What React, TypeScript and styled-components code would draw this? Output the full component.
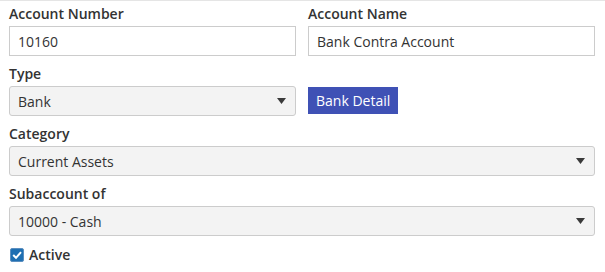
import {createGlobalStyle, styled} from "styled-components";

const GlobalStyle = createGlobalStyle`
  body {
    margin: 0;
    background: #fff;
    font-family: "Open Sans", "Liberation Sans", sans-serif;
    font-size: 14px;
    color: #333;
  }
`;

const Form = styled.div`
  width: 605px;
  box-sizing: border-box;
  border-top: 1px solid #e5e5e5;
  padding: 3px 10px 0 9px;
`;

const Row = styled.div<{ $cols?: number }>`
  display: grid;
  grid-template-columns: ${p => p.$cols === 1 ? "1fr" : "287px 287px"};
  column-gap: 12px;
`;

const Group = styled.div`
  display: flex;
  flex-direction: column;
  margin-bottom: 8px;
`;

const Label = styled.label`
  font-weight: 600;
  line-height: 20px;
  margin-bottom: 2px;
  color: #333;
`;

const TextBox = styled.div`
  height: 30px;
  box-sizing: border-box;
  border: 1px solid #ccc;
  padding: 0 8px;
  display: flex;
  align-items: center;
  color: #333;
`;

const SelectBox = styled.div`
  height: 30px;
  box-sizing: border-box;
  border: 1px solid #ccc;
  border-radius: 3px;
  background: #f3f3f3;
  padding: 0 9px 0 8px;
  display: flex;
  align-items: center;
  justify-content: space-between;
  color: #333;
`;

const Arrow = () => (
  <svg width="9" height="6" viewBox="0 0 9 6">
    <path d="M0 0 H9 L4.5 6 Z" fill="#3a3a3a"/>
  </svg>
);

const Spacer = styled.div`
  height: 22px;
`;

const DetailButton = styled.button`
  align-self: flex-start;
  margin-top: 1px;
  height: 27px;
  padding: 0 8px;
  border: none;
  background: #3f51b5;
  color: #fff;
  font-family: inherit;
  font-size: 14px;
  cursor: pointer;
`;

const CheckRow = styled.label`
  display: flex;
  align-items: center;
  gap: 5px;
  margin-top: 1px;
  padding-left: 1px;
  font-weight: 600;
  line-height: 20px;
`;

const CheckBox = styled.span`
  width: 14px;
  height: 14px;
  box-sizing: border-box;
  border: 1px solid #5b8fc0;
  border-radius: 2px;
  background: #1f6fb2;
  display: flex;
  align-items: center;
  justify-content: center;
`;

export default function App() {
  return (
    <>
      <GlobalStyle/>
      <Form>
        <Row>
          <Group>
            <Label>Account Number</Label>
            <TextBox>10160</TextBox>
          </Group>
          <Group>
            <Label>Account Name</Label>
            <TextBox>Bank Contra Account</TextBox>
          </Group>
        </Row>
        <Row>
          <Group>
            <Label>Type</Label>
            <SelectBox>Bank<Arrow/></SelectBox>
          </Group>
          <Group>
            <Spacer/>
            <DetailButton>Bank Detail</DetailButton>
          </Group>
        </Row>
        <Row $cols={1}>
          <Group>
            <Label>Category</Label>
            <SelectBox>Current Assets<Arrow/></SelectBox>
          </Group>
        </Row>
        <Row $cols={1}>
          <Group>
            <Label>Subaccount of</Label>
            <SelectBox>10000 - Cash<Arrow/></SelectBox>
          </Group>
        </Row>
        <CheckRow>
          <CheckBox>
            <svg width="12" height="12" viewBox="0 0 12 12">
              <path d="M2.2 6 L5 8.8 L10 3.2" stroke="#fff" strokeWidth="2" fill="none"/>
            </svg>
          </CheckBox>
          Active
        </CheckRow>
      </Form>
    </>
  );
}
